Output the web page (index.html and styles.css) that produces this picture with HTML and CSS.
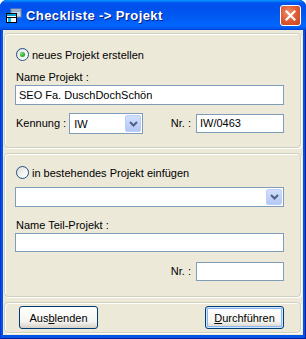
FILE: index.html
```html
<!DOCTYPE html>
<html lang="de">
<head>
    <title>Checkliste -> Projekt</title>
    <link rel="stylesheet" href="styles.css">
</head>
<body>
    <div class="window">
        <div class="titlebar">
            <svg class="app-icon" width="16" height="16" viewBox="0 0 16 16">
                <rect x="5" y="1" width="10" height="8" fill="#c8d8e8" stroke="#8090a0"/>
                <path d="M5 3h10" stroke="#6a8ab0"/>
                <rect x="0.5" y="5.5" width="10" height="9" fill="#ffffff" stroke="#000"/>
                <rect x="1" y="6" width="9" height="2" fill="#00a0d8"/>
                <path d="M1 9.5h9" stroke="#000"/>
                <rect x="2" y="10" width="3" height="4" fill="#00c0e8"/>
            </svg>
            <p class="title">Checkliste -&gt; Projekt</p>
            <button class="close-btn">
                <svg width="11" height="11" viewBox="0 0 11 11">
                    <path d="M1.5 1.5l8 8M9.5 1.5l-8 8" stroke="#fff" stroke-width="2.2" stroke-linecap="square"/>
                </svg>
            </button>
        </div>

        <div class="client">
            <div class="group group-new">
                <label class="radio-row">
                    <span class="radio checked"></span>
                    neues Projekt erstellen
                </label>
                <p class="label label-name">Name Projekt :</p>
                <div class="input input-full">SEO Fa. DuschDochSchön</div>
                <div class="row row-kennung">
                    <span class="label">Kennung :</span>
                    <div class="combo combo-small">
                        <span class="combo-text">IW</span>
                        <span class="combo-btn">
                            <svg width="9" height="6" viewBox="0 0 9 6"><path d="M1 1l3.5 3.5L8 1" fill="none" stroke="#4d6185" stroke-width="2"/></svg>
                        </span>
                    </div>
                    <span class="label label-nr">Nr. :</span>
                    <div class="input input-nr">IW/0463</div>
                </div>
            </div>

            <div class="group group-existing">
                <label class="radio-row">
                    <span class="radio"></span>
                    in bestehendes Projekt einfügen
                </label>
                <div class="combo combo-full">
                    <span class="combo-text"></span>
                    <span class="combo-btn">
                        <svg width="9" height="6" viewBox="0 0 9 6"><path d="M1 1l3.5 3.5L8 1" fill="none" stroke="#4d6185" stroke-width="2"/></svg>
                    </span>
                </div>
                <p class="label label-teil">Name Teil-Projekt :</p>
                <div class="input input-full input-teil"></div>
                <div class="row row-nr2">
                    <span class="label label-nr">Nr. :</span>
                    <div class="input input-nr"></div>
                </div>
            </div>

            <div class="group group-buttons">
                <button class="xp-button">Aus<u>b</u>lenden</button>
                <button class="xp-button default"><u>D</u>urchführen</button>
            </div>
        </div>
    </div>
</body>
</html>
```

FILE: styles.css
```css
*{
    box-sizing: border-box;
}
p{
    margin: 0;
}
body{
    margin: 0;
    background-color: #ffffff;
    font-family: "Liberation Sans", Arial, sans-serif;
    font-size: 11px;
    color: #000000;
}
.window{
    width: 306px;
    height: 339px;
    display: flex;
    flex-direction: column;
    background-color: #0055e5;
    border-radius: 7px 7px 0 0;
    box-shadow: inset 1px 0 #0831d9, inset -1px 0 #001ea0, inset 0 -1px #001ea0;
    overflow: hidden;
}
.titlebar{
    height: 30px;
    flex-shrink: 0;
    display: flex;
    align-items: center;
    padding-left: 6px;
    padding-right: 5px;
    background: linear-gradient(#0997ff 0, #0053ee 3px, #0050ee 8px, #0058f0 50%, #0066ff 86%, #0058ee 94%, #003dd7 100%);
}
.app-icon{
    flex-shrink: 0;
    margin-top: 1px;
}
.title{
    flex: 1;
    margin-left: 4px;
    color: #ffffff;
    font-family: "Liberation Sans", Arial, sans-serif;
    font-weight: bold;
    font-size: 13px;
    text-shadow: 1px 1px #0a1883;
    letter-spacing: 0.4px;
}
.close-btn{
    width: 21px;
    height: 21px;
    padding: 0;
    margin-top: 1px;
    display: flex;
    align-items: center;
    justify-content: center;
    border: 1px solid #ffffff;
    border-radius: 3px;
    background: radial-gradient(circle at 40% 35%, #ee9070 0, #e05a32 50%, #c4441f 100%);
}
.client{
    flex: 1;
    margin: 0 3px 4px 3px;
    background-color: #ece9d8;
    padding: 3px 2px 2px 1px;
    display: flex;
    flex-direction: column;
    gap: 5px;
}
.group{
    border: 1px solid #d0d0bf;
    border-radius: 4px;
    box-shadow: 1px 1px 0 #ffffff, inset 1px 1px 0 #ffffff;
    padding: 0 16px 0 10px;
    display: flex;
    flex-direction: column;
}
.group-new{
    height: 115px;
    padding-top: 14px;
}
.group-existing{
    height: 144px;
    padding-top: 12px;
}
.group-buttons{
    flex: 1;
    flex-direction: row;
    justify-content: space-between;
    padding: 3px 16px 0 14px;
}
.radio-row{
    display: flex;
    align-items: center;
    height: 13px;
    margin-left: 1px;
    gap: 3px;
}
.radio{
    width: 13px;
    height: 13px;
    border-radius: 50%;
    border: 1px solid #1c5180;
    background: linear-gradient(135deg, #dcdcd7 0%, #ffffff 80%);
    display: flex;
    align-items: center;
    justify-content: center;
}
.radio.checked::after{
    content: "";
    width: 5px;
    height: 5px;
    border-radius: 50%;
    background: radial-gradient(circle at 35% 35%, #72e46c 0, #21a121 70%);
}
.label{
    margin-left: 1px;
    line-height: 13px;
}
.label-name{
    margin-top: 10px;
}
.input{
    height: 20px;
    border: 1px solid #7f9db9;
    background-color: #ffffff;
    padding-left: 3px;
    line-height: 18px;
}
.input-full{
    margin-top: 1px;
}
.row{
    display: flex;
    align-items: center;
}
.row-kennung{
    margin-top: 8px;
}
.combo{
    display: flex;
    align-items: center;
    height: 21px;
    border: 1px solid #7f9db9;
    background-color: #ffffff;
    padding: 1px;
}
.combo-text{
    flex: 1;
    padding-left: 3px;
}
.combo-small{
    width: 74px;
    margin-left: 3px;
}
.combo-full{
    margin-top: 8px;
    height: 20px;
}
.combo-btn{
    width: 16px;
    height: 100%;
    display: flex;
    align-items: center;
    justify-content: center;
    border: 1px solid #b9cff9;
    border-radius: 2px;
    background: linear-gradient(#d2defc, #b4c8f6);
}
.label-nr{
    margin-left: auto;
    margin-right: 5px;
}
.input-nr{
    width: 88px;
    height: 19px;
    line-height: 17px;
}
.label-teil{
    margin-top: 12px;
}
.input-teil{
    height: 19px;
}
.row-nr2{
    margin-top: 10px;
}
.xp-button{
    width: 79px;
    height: 23px;
    padding: 0;
    font-family: "Liberation Sans", Arial, sans-serif;
    font-size: 11px;
    color: #000000;
    border: 1px solid #003c74;
    border-radius: 3px;
    background: linear-gradient(#ffffff 0%, #f4f4f0 70%, #d6d0c5 100%);
}
.xp-button.default{
    box-shadow: inset 0 0 0 1px #cee7ff, inset 0 0 0 2px #8cb4f2;
}
```
